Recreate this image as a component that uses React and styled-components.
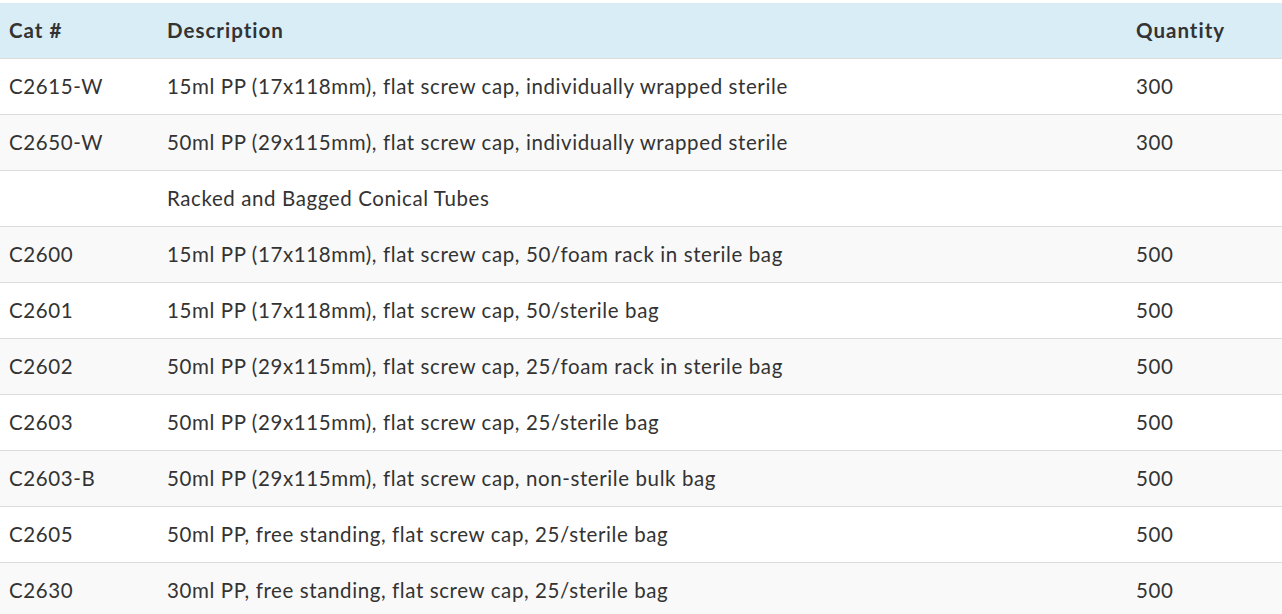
import React from "react";
import styled, { createGlobalStyle } from "styled-components";

const Global = createGlobalStyle`
  html, body { margin: 0; padding: 0; background: #fff; }
  body { font-family: Lato, "Open Sans", sans-serif; color: #333; }
`;

const Wrap = styled.div`
  padding-top: 3px;
`;

const Table = styled.table`
  width: 1282px;
  table-layout: fixed;
  border-collapse: collapse;
  border-spacing: 0;
  font-size: 20.5px;
  letter-spacing: 0.6px;
`;

const HeadRow = styled.tr`
  background: #d9edf7;
`;

const Th = styled.th`
  text-align: left;
  font-weight: 700;
  letter-spacing: 1px;
  height: 55px;
  padding: 0 9px;
  border-bottom: 1px solid #ddd;
  width: ${(p) => p.$w || "auto"};
  box-sizing: border-box;
`;

const Row = styled.tr`
  background: ${(p) => (p.$striped ? "#f9f9f9" : "#fff")};
`;

const Td = styled.td`
  height: 56px;
  padding: 0 9px;
  border-top: 1px solid #ddd;
  box-sizing: border-box;
  vertical-align: middle;
  white-space: nowrap;
`;

const rows = [
  ["C2615-W", "15ml PP (17x118mm), flat screw cap, individually wrapped sterile", "300"],
  ["C2650-W", "50ml PP (29x115mm), flat screw cap, individually wrapped sterile", "300"],
  ["", "Racked and Bagged Conical Tubes", ""],
  ["C2600", "15ml PP (17x118mm), flat screw cap, 50/foam rack in sterile bag", "500"],
  ["C2601", "15ml PP (17x118mm), flat screw cap, 50/sterile bag", "500"],
  ["C2602", "50ml PP (29x115mm), flat screw cap, 25/foam rack in sterile bag", "500"],
  ["C2603", "50ml PP (29x115mm), flat screw cap, 25/sterile bag", "500"],
  ["C2603-B", "50ml PP (29x115mm), flat screw cap, non-sterile bulk bag", "500"],
  ["C2605", "50ml PP, free standing, flat screw cap, 25/sterile bag", "500"],
  ["C2630", "30ml PP, free standing, flat screw cap, 25/sterile bag", "500"],
];

export default function App() {
  return (
    <Wrap>
      <Global />
      <Table>
        <thead>
          <HeadRow>
            <Th $w="158px">Cat #</Th>
            <Th>Description</Th>
            <Th $w="155px">Quantity</Th>
          </HeadRow>
        </thead>
        <tbody>
          {rows.map((r, i) => (
            <Row key={i} $striped={i % 2 === 1}>
              <Td>{r[0]}</Td>
              <Td>{r[1]}</Td>
              <Td>{r[2]}</Td>
            </Row>
          ))}
        </tbody>
      </Table>
    </Wrap>
  );
}
